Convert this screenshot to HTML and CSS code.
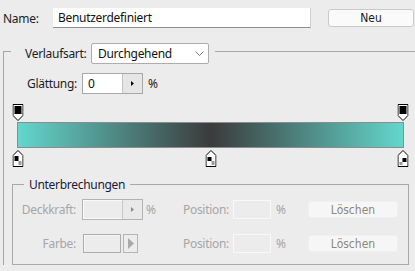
FILE: index.html
```html
<!DOCTYPE html>
<html lang="de">
<head>
<meta charset="utf-8">
<link rel="stylesheet" href="styles.css">
</head>
<body>
<div class="top">
  <span class="lbl name-lbl">Name:</span>
  <div class="name-input">Benutzerdefiniert</div>
  <button class="btn neu">Neu</button>
</div>
<fieldset class="main">
  <legend class="main-legend">
    <span class="lbl type-lbl">Verlaufsart:</span>
    <div class="select">
      <span>Durchgehend</span>
      <svg class="chev" width="9" height="5" viewBox="0 0 9 5"><path d="M0.5 0.5L4.5 4.5L8.5 0.5" fill="none" stroke="#7a7a7a" stroke-width="1"/></svg>
    </div>
  </legend>
  <div class="smooth-row">
    <span class="lbl smooth-lbl">Glättung:</span>
    <div class="spin">
      <span class="spin-val">0</span>
      <span class="spin-btn"><svg width="3" height="5" viewBox="0 0 3 5"><path d="M0 0L3 2.5L0 5Z" fill="#000"/></svg></span>
    </div>
    <span class="pct">%</span>
  </div>
  <div class="gradient">
    <div class="bar"></div>
    <div class="track">
      <svg class="ostop" style="left:0%" width="11" height="17" viewBox="0 0 11 17"><path d="M0.5 0.5H10.5V11.5L5.5 16.5L0.5 11.5Z" fill="#fff" stroke="#000"/><rect x="2" y="2" width="7" height="8" fill="#000"/></svg>
      <svg class="ostop" style="left:100%" width="11" height="17" viewBox="0 0 11 17"><path d="M0.5 0.5H10.5V11.5L5.5 16.5L0.5 11.5Z" fill="#fff" stroke="#000"/><rect x="2" y="2" width="7" height="8" fill="#000"/></svg>
      <svg class="cstop" style="left:0%" width="11" height="17" viewBox="0 0 11 17"><path d="M5.5 0.5L10.5 5.5V16.5H0.5V5.5Z" fill="#fff" stroke="#000"/><rect x="2" y="6" width="4" height="5" fill="#000"/><rect x="6" y="11" width="3" height="4" fill="#9a9a9a"/></svg>
      <svg class="cstop" style="left:50%" width="11" height="17" viewBox="0 0 11 17"><path d="M5.5 0.5L10.5 5.5V16.5H0.5V5.5Z" fill="#fff" stroke="#000"/><rect x="2" y="7" width="4" height="4" fill="#000"/><rect x="6" y="11" width="3" height="4" fill="#9a9a9a"/></svg>
      <svg class="cstop" style="left:100%" width="11" height="17" viewBox="0 0 11 17"><path d="M5.5 0.5L10.5 5.5V16.5H0.5V5.5Z" fill="#fff" stroke="#000"/><rect x="5" y="8" width="4" height="4" fill="#000"/><rect x="2" y="12" width="3" height="3" fill="#9a9a9a"/></svg>
    </div>
  </div>
  <fieldset class="stops">
    <legend class="stops-legend">Unterbrechungen</legend>
    <div class="stop-row">
      <span class="dlbl">Deckkraft:</span>
      <div class="cell">
        <div class="spin dis">
          <span class="spin-val"></span>
          <span class="spin-btn"><svg width="3" height="5" viewBox="0 0 3 5"><path d="M0 0L3 2.5L0 5Z" fill="#8a8a8a"/></svg></span>
        </div>
      </div>
      <span class="dpct">%</span>
      <span class="dlbl pos-lbl">Position:</span>
      <div class="pos-input"></div>
      <span class="dpct pos-pct">%</span>
      <button class="btn del">Löschen</button>
    </div>
    <div class="stop-row">
      <span class="dlbl">Farbe:</span>
      <div class="cell">
        <div class="swatch"></div>
        <div class="swatch-btn"><svg width="6" height="11" viewBox="0 0 6 11"><path d="M0 0L6 5.5L0 11Z" fill="#a9a9a9"/></svg></div>
      </div>
      <span class="dpct"></span>
      <span class="dlbl pos-lbl">Position:</span>
      <div class="pos-input"></div>
      <span class="dpct pos-pct">%</span>
      <button class="btn del">Löschen</button>
    </div>
  </fieldset>
</fieldset>
</body>
</html>
```

FILE: styles.css
```css
html, body {
  margin: 0;
  padding: 0;
}
body {
  background: #ececec;
  font-family: "Noto Sans", sans-serif;
  font-size: 12px;
  letter-spacing: -0.3px;
  color: #1d1d24;
  width: 415px;
  height: 271px;
  overflow: hidden;
}
.top {
  display: flex;
  align-items: center;
  padding: 8px 0 0 3px;
}
.name-lbl {
  width: 50px;
}
.name-input {
  width: 258px;
  height: 20px;
  box-sizing: border-box;
  background: #fff;
  border-bottom: 1px solid #8f8f8f;
  border-right: 1px solid #d0d0d0;
  padding-left: 5px;
  line-height: 19px;
  color: #111;
}
.btn {
  font-family: "DejaVu Sans Condensed", "DejaVu Sans", sans-serif;
  font-size: 12px;
  letter-spacing: 0;
  box-sizing: border-box;
  padding: 0;
  margin: 0;
}
.neu {
  margin-left: 17px;
  width: 86px;
  height: 18px;
  background: #fafafa;
  border: 1px solid #c9c9c9;
  border-radius: 3px;
  color: #1a1a1a;
  line-height: 15px;
}
.main {
  margin: 11px 0 0 3px;
  padding: 0;
  border: 0;
  border-top: 1px solid #a5a5a5;
  border-left: 1px solid #a5a5a5;
  min-width: 0;
  height: 225px;
}
.main-legend {
  display: flex;
  align-items: center;
  margin-left: 7px;
  padding: 4px 6px 0 14px;
}
.type-lbl {
  width: 63px;
}
.select {
  margin-left: 3px;
  width: 118px;
  height: 21px;
  box-sizing: border-box;
  background: #fff;
  border: 1px solid #adadad;
  border-radius: 2px;
  display: flex;
  align-items: center;
  justify-content: space-between;
  padding: 0 4px 0 6px;
  color: #111;
}
.chev {
  display: block;
}
.smooth-row {
  display: flex;
  align-items: center;
  margin-top: 9px;
  padding-left: 23px;
}
.smooth-lbl {
  width: 55px;
}
.spin {
  display: flex;
  width: 61px;
  height: 21px;
  box-sizing: border-box;
  border: 1px solid #a8a8a8;
  background: #fff;
}
.spin-val {
  flex: 1;
  padding-left: 5px;
  line-height: 19px;
  color: #111;
}
.spin-btn {
  width: 19px;
  background: #e6e6e6;
  border-left: 1px solid #c4c4c4;
  display: flex;
  align-items: center;
  justify-content: center;
}
.spin-btn svg {
  display: block;
}
.pct {
  margin-left: 5px;
}
.gradient {
  position: relative;
  margin: 10px 0 0 9px;
  width: 395px;
  box-sizing: border-box;
  padding: 18px 4px 19px 4px;
}
.bar {
  height: 26px;
  box-sizing: border-box;
  border: 1px solid #8c8c8c;
  background: linear-gradient(to right, #63d7cd 0%, #3b3b3b 50%, #63d7cd 100%);
}
.track {
  position: absolute;
  top: 0;
  bottom: 0;
  left: 5px;
  right: 5px;
}
.ostop, .cstop {
  position: absolute;
  transform: translateX(-50%);
  display: block;
}
.ostop {
  top: 0;
}
.cstop {
  bottom: 0;
}
.stops {
  margin: 9px 0 0 8px;
  width: 397px;
  box-sizing: border-box;
  padding: 0 0 10px 0;
  border: 1px solid #a9a9a9;
  min-width: 0;
}
.stops-legend {
  margin-left: 11px;
  padding: 0 5px 0 5px;
  color: #1a1a3a;
}
.stop-row {
  display: flex;
  align-items: center;
  height: 21px;
  margin-top: 6px;
}
.stop-row + .stop-row {
  margin-top: 13px;
}
.dlbl {
  width: 63px;
  text-align: right;
  color: #a6a6a6;
}
.cell {
  margin-left: 6px;
  width: 64px;
  display: flex;
  align-items: center;
}
.spin.dis {
  background: #ececec;
  border-color: #b3b3b3;
  box-shadow: inset 1px 1px 0 #fafafa, inset -1px -1px 0 #fafafa;
}
.spin.dis .spin-btn {
  background: #e9e9e9;
  border-left-color: #c8c8c8;
}
.dpct {
  width: 36px;
  color: #a6a6a6;
}
.pos-lbl {
  width: 47px;
}
.pos-input {
  margin-left: 4px;
  width: 38px;
  height: 19px;
  box-sizing: border-box;
  border: 1px solid #f8f8f8;
}
.pos-pct {
  width: 32px;
  margin-left: 5px;
}
.swatch {
  margin-left: 1px;
  width: 38px;
  height: 19px;
  box-sizing: border-box;
  border: 1px solid #acacac;
  box-shadow: inset 1px 1px 0 #f6f6f6;
}
.swatch-btn {
  margin-left: 2px;
  width: 15px;
  height: 19px;
  box-sizing: border-box;
  border: 1px solid #b5b5b5;
  display: flex;
  align-items: center;
  justify-content: center;
}
.swatch-btn svg {
  display: block;
}
.del {
  width: 90px;
  height: 17px;
  background: #f6f6f6;
  border: 1px solid #f0f0f0;
  border-radius: 3px;
  color: #8d877d;
  line-height: 14px;
}
```
